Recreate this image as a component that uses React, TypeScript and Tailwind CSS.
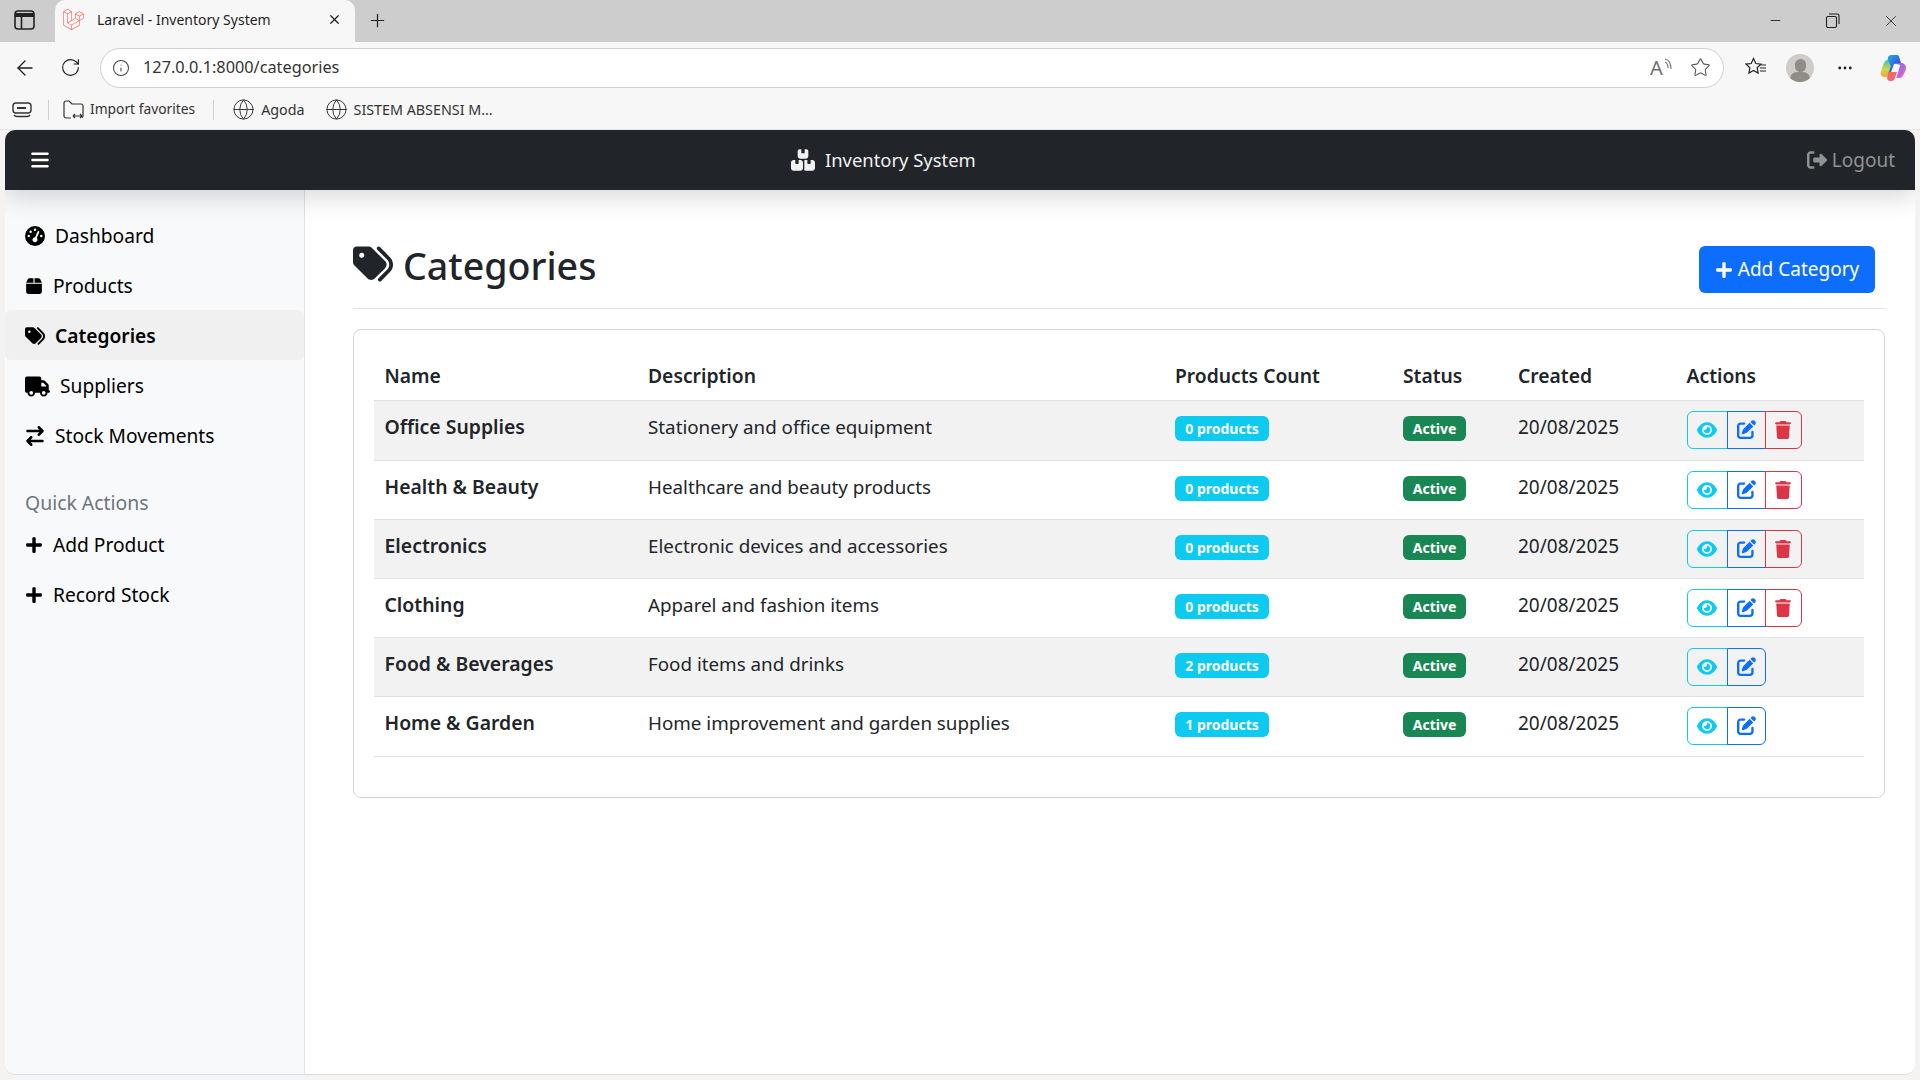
import {
  ArrowLeft,
  Globe,
  Info,
  Minus,
  MoreHorizontal,
  Plus,
  RotateCw,
  Star,
  X,
} from "lucide-react";
import { FaLaravel, FaPlus } from "react-icons/fa";
import {
  FaArrowRightArrowLeft,
  FaBars,
  FaBox,
  FaBoxesStacked,
  FaEye,
  FaGaugeHigh,
  FaPenToSquare,
  FaRightFromBracket,
  FaTags,
  FaTrash,
  FaTruck,
} from "react-icons/fa6";

const font = "font-['Noto_Sans',sans-serif]";

const categories = [
  { name: "Office Supplies", description: "Stationery and office equipment", count: 0, canDelete: true, height: "h-[60px] bg-[#f2f2f2]" },
  { name: "Health & Beauty", description: "Healthcare and beauty products", count: 0, canDelete: true, height: "h-[59px]" },
  { name: "Electronics", description: "Electronic devices and accessories", count: 0, canDelete: true, height: "h-[59px] bg-[#f2f2f2]" },
  { name: "Clothing", description: "Apparel and fashion items", count: 0, canDelete: true, height: "h-[59px]" },
  { name: "Food & Beverages", description: "Food items and drinks", count: 2, canDelete: false, height: "h-[59px] bg-[#f2f2f2]" },
  { name: "Home & Garden", description: "Home improvement and garden supplies", count: 1, canDelete: false, height: "h-[60px]" },
];

function CopilotLogo() {
  return (
    <svg width="28" height="28" viewBox="0 0 28 28" className="ml-[25px]">
      <defs>
        <linearGradient id="copilotA" x1="0" y1="0" x2="1" y2="1">
          <stop offset="0" stopColor="#19c3e8" />
          <stop offset="0.5" stopColor="#2f6fe0" />
          <stop offset="1" stopColor="#1b3fb5" />
        </linearGradient>
        <linearGradient id="copilotB" x1="0" y1="0" x2="0" y2="1">
          <stop offset="0" stopColor="#3fc4a5" />
          <stop offset="0.55" stopColor="#c8d84a" />
          <stop offset="1" stopColor="#f6a53c" />
        </linearGradient>
        <linearGradient id="copilotC" x1="0" y1="0" x2="1" y2="1">
          <stop offset="0" stopColor="#7a63e6" />
          <stop offset="1" stopColor="#e86ad0" />
        </linearGradient>
        <linearGradient id="copilotD" x1="0" y1="0" x2="1" y2="1">
          <stop offset="0" stopColor="#f9703e" />
          <stop offset="1" stopColor="#ee5f9e" />
        </linearGradient>
      </defs>
      <path d="M9 3c1-1.500 2-2 4-2h5c1 0 1.800.6 2 1.500L22 9l-7 1-3 8H7z" fill="url(#copilotA)" />
      <path d="M9 6c-2 0-3 1-4 3l-3 8c-1 3 .5 6 3.500 6H8l4-11z" fill="url(#copilotB)" />
      <path d="M15 9h7c3 0 5 2 5 5 0 1-.3 2-.7 3l-2 4c-1 2-2 3-4 3h-3l4-13z" fill="url(#copilotC)" />
      <path d="M9 18h9l-2 6c-.6 2-1.500 3-3.500 3h-1.500c-1.500 0-2.500-1-3-2.500z" fill="url(#copilotD)" />
    </svg>
  );
}

function BrowserChrome() {
  return (
    <div className="font-['Noto_Sans',sans-serif] text-[#1f1f1f]">
      {/* Tab strip */}
      <div className="h-[42px] bg-[#cdcdcd] flex items-end">
        <svg width="21" height="20" viewBox="0 0 21 20" className="ml-[14px] mb-[12px] text-[#222]" fill="none" stroke="currentColor" strokeWidth="1.6">
          <rect x="1" y="1" width="19" height="18" rx="3" />
          <path d="M1 5h19" strokeWidth="4" />
          <path d="M7.500 6v13" />
        </svg>
        <div className="ml-[20px] w-[300px] h-[42px] pb-[4px] bg-[#f7f7f7] rounded-t-[10px] flex items-center">
          <FaLaravel className="ml-[8px] text-[#f4715f]" size={21} />
          <span className="ml-[13px] text-[14px] whitespace-nowrap">Laravel - Inventory System</span>
          <X className="ml-auto mr-[13px] shrink-0" size={15} strokeWidth={2} />
        </div>
        <Plus className="ml-[12px] mb-[11px]" size={21} strokeWidth={1.4} />
        <Minus className="ml-auto mb-[14px]" size={15} strokeWidth={1.4} />
        <svg width="15" height="15" viewBox="0 0 15 15" className="ml-[42px] mb-[14px]" fill="none" stroke="#222" strokeWidth="1.1">
          <rect x="1.500" y="3.500" width="10" height="11" rx="1.500" />
          <path d="M4 1h8.500a1.500 1.500 0 0 1 1.500 1.500V11" />
        </svg>
        <X className="ml-[42px] mr-[20px] mb-[12px]" size={18} strokeWidth={1.1} />
      </div>

      {/* Address row */}
      <div className="h-[51px] bg-[#f7f7f7] flex items-center">
        <ArrowLeft className="ml-[13px]" size={24} strokeWidth={1.3} />
        <RotateCw className="ml-[23px]" size={21} strokeWidth={1.3} />
        <div className="ml-[19px] w-[1624px] h-[40px] bg-white rounded-full border border-[#cfcfcf] flex items-center">
          <Info className="ml-[11px] text-[#444]" size={18} strokeWidth={1.4} />
          <span className="ml-[13px] text-[16.3px] text-[#333]">127.0.0.1:8000/categories</span>
          <span className="ml-auto relative w-[20px] h-[20px] text-[#707070]">
            <span className="absolute left-0 -top-[3px] text-[20px] leading-[26px]">A</span>
            <svg width="9" height="12" viewBox="0 0 9 12" className="absolute right-[-3px] top-0" fill="none" stroke="currentColor" strokeWidth="1.1">
              <path d="M1 1c4 1 6 5 6 10M1 4c2 1 3 3 3 6" />
            </svg>
          </span>
          <Star className="ml-[20px] mr-[12px] text-[#555]" size={21} strokeWidth={1.2} />
        </div>
        <span className="ml-[21px] relative w-[21px] h-[21px]">
          <svg width="22" height="21" viewBox="0 0 22 21" fill="none" stroke="#222" strokeWidth="1.2">
            <path d="M8.500 1.500l2.300 5 5.200.6-3.900 3.600 1 5.300-4.600-2.600-4.600 2.600 1-5.300L1 7.100l5.200-.6z" />
            <path d="M15 11h6M15 14h6M16 8h5" strokeWidth="1.2" />
          </svg>
        </span>
        <span className="ml-[20px] w-[28px] h-[28px] rounded-full bg-[#cfccc8] overflow-hidden relative">
          <span className="absolute left-[9px] top-[5px] w-[11px] h-[13px] rounded-full bg-[#8f8b87]" />
          <span className="absolute left-[4px] top-[18px] w-[20px] h-[14px] rounded-full bg-[#8f8b87]" />
        </span>
        <MoreHorizontal className="ml-[22px] text-[#222]" size={18} strokeWidth={1.8} />
        <CopilotLogo />
      </div>

      {/* Bookmarks row */}
      <div className="h-[37px] pb-[3px] bg-[#f7f7f7] border-b border-[#e6e6e6] flex items-center text-[14.3px] text-[#333]">
        <svg width="20" height="16" viewBox="0 0 20 16" className="ml-[12px]" fill="none" stroke="#333" strokeWidth="1.4">
          <rect x="1" y="1" width="18" height="10" rx="3" />
          <path d="M5 6h9" strokeWidth="2" />
          <path d="M2 13c1 1.500 2 1.500 3 1.500h10c1 0 2 0 3-1.500" />
        </svg>
        <span className="ml-[16px] w-px h-[20px] bg-[#cfcfcf]" />
        <svg width="21" height="20" viewBox="0 0 21 20" className="ml-[14px]" fill="none" stroke="#333" strokeWidth="1.2">
          <path d="M8 18H3a2 2 0 0 1-2-2V3a2 2 0 0 1 2-2h3l3 3h9a2 2 0 0 1 2 2v10a2 2 0 0 1-1 1.700" />
          <path d="M10 16h9M10 16l2-2M10 16l2 2M19 16l-2-2M19 16l-2 2" />
        </svg>
        <span className="ml-[6px] text-[13.8px] whitespace-nowrap">Import favorites</span>
        <span className="ml-[18px] w-px h-[20px] bg-[#cfcfcf]" />
        <Globe className="ml-[18px] text-[#333]" size={23} strokeWidth={1} />
        <span className="ml-[6px]">Agoda</span>
        <Globe className="ml-[20px] text-[#333]" size={23} strokeWidth={1} />
        <span className="ml-[6px] whitespace-nowrap">SISTEM ABSENSI M...</span>
      </div>
    </div>
  );
}

function NavLink({
  icon,
  label,
  active,
}: {
  icon: React.ReactNode;
  label: string;
  active?: boolean;
}) {
  return (
    <div
      className={`h-[50px] px-5 pt-[2px] flex items-center gap-[10px] text-[19.2px] text-black rounded-[6px] ${
        active ? "bg-[#f0f0f0] font-semibold" : ""
      }`}
    >
      {icon}
      <span className="whitespace-nowrap">{label}</span>
    </div>
  );
}

function Sidebar() {
  return (
    <aside className="w-[300px] shrink-0 bg-[#f8f9fa] border-r border-[#dee2e6] pt-5 rounded-bl-[10px]">
      <NavLink icon={<FaGaugeHigh size={20} />} label="Dashboard" />
      <NavLink icon={<FaBox size={18} />} label="Products" />
      <NavLink icon={<FaTags size={20} />} label="Categories" active />
      <NavLink icon={<FaTruck size={25} />} label="Suppliers" />
      <NavLink icon={<FaArrowRightArrowLeft size={20} />} label="Stock Movements" />
      <div className="h-[59px] pt-[28px] px-5 text-[19.4px] leading-[30px] text-[#6c757d]">
        Quick Actions
      </div>
      <NavLink icon={<FaPlus size={18} />} label="Add Product" />
      <NavLink icon={<FaPlus size={18} />} label="Record Stock" />
    </aside>
  );
}

function ActionButtons({ canDelete }: { canDelete: boolean }) {
  return (
    <div className="flex h-[38px] w-fit">
      <span className="w-[41px] border border-[#0dcaf0] rounded-l-[6px] flex items-center justify-center text-[#0dcaf0]">
        <FaEye size={20} />
      </span>
      <span
        className={`w-[39px] -ml-px border border-[#0d6efd] flex items-center justify-center text-[#0d6efd] ${
          canDelete ? "" : "rounded-r-[6px]"
        }`}
      >
        <FaPenToSquare size={19} />
      </span>
      {canDelete && (
        <span className="w-[37px] -ml-px border border-[#dc3545] rounded-r-[6px] flex items-center justify-center text-[#dc3545]">
          <FaTrash size={18} />
        </span>
      )}
    </div>
  );
}

function CategoriesTable() {
  return (
    <table className="w-[1490px] table-fixed border-collapse text-[19px] text-[#212529]">
      <colgroup>
        <col className="w-[264px]" />
        <col className="w-[527px]" />
        <col className="w-[228px]" />
        <col className="w-[115px]" />
        <col className="w-[168px]" />
        <col className="w-[188px]" />
      </colgroup>
      <thead>
        <tr className="h-[50px] border-b border-[#dee2e6] text-left text-[19.3px]">
          <th className="pl-[10.5px] pt-[4px] font-semibold">Name</th>
          <th className="px-[10px] pt-[4px] font-semibold">Description</th>
          <th className="px-[10px] pt-[4px] font-semibold">Products Count</th>
          <th className="px-[10px] pt-[4px] font-semibold">Status</th>
          <th className="px-[10px] pt-[4px] font-semibold">Created</th>
          <th className="pl-[10.5px] pt-[4px] font-semibold">Actions</th>
        </tr>
      </thead>
      <tbody>
        {categories.map((category) => (
          <tr key={category.name} className={`border-b border-[#dee2e6] ${category.height}`}>
            <td className="pl-[10.5px] pt-[11px] align-top text-[19.4px] font-semibold leading-[30px] whitespace-nowrap">
              {category.name}
            </td>
            <td className="px-[10px] pt-[11px] align-top text-[18.8px] leading-[30px] whitespace-nowrap">
              {category.description}
            </td>
            <td className="px-[10px] pt-[15px] align-top">
              <span className="flex h-[25px] w-[94px] items-center justify-center rounded-[6px] bg-[#0dcaf0] text-white text-[14px] font-bold">
                {category.count} products
              </span>
            </td>
            <td className="px-[10px] pt-[15px] align-top">
              <span className="flex h-[25px] w-[63px] items-center justify-center rounded-[6px] bg-[#198754] text-white text-[14px] font-bold">
                Active
              </span>
            </td>
            <td className="px-[10px] pt-[11px] align-top leading-[30px]">20/08/2025</td>
            <td className="pl-[10.5px] pt-[10px] align-top">
              <ActionButtons canDelete={category.canDelete} />
            </td>
          </tr>
        ))}
      </tbody>
    </table>
  );
}

export default function App() {
  return (
    <div className={`h-screen w-[1920px] flex flex-col overflow-hidden bg-[#f5f3f1] ${font}`}>
      <BrowserChrome />
      <div className="ml-[5px] mr-[5px] mb-[5px] flex-1 min-h-0 bg-white rounded-t-[10px] rounded-b-[10px] flex flex-col relative overflow-hidden border-b border-[#dcdcdc]">
        {/* Top navbar */}
        <nav className="h-[60px] shrink-0 bg-[#212529] text-white flex items-center relative z-10 shadow-[0_8px_24px_rgba(0,0,0,0.15)]">
          <FaBars className="ml-[25px]" size={20} />
          <div className="ml-[741px] flex items-center gap-[10px] text-[18.4px] text-[#f1f1f1]">
            <FaBoxesStacked size={24} />
            <span className="whitespace-nowrap">Inventory System</span>
          </div>
          <div className="ml-auto mr-5 flex items-center gap-[5px] text-[19px] text-[#909294]">
            <FaRightFromBracket size={20} />
            <span>Logout</span>
          </div>
        </nav>

        <div className="flex-1 min-h-0 flex">
          <Sidebar />
          <main className="flex-1 min-w-0 pl-[48px] pr-[30px] pt-[56px]">
            <div className="h-[63px] border-b border-[#dee2e6] flex items-start">
              <FaTags className="text-[#212529] -mt-[2px]" size={40} />
              <h1 className="ml-[10px] -mt-[4px] text-[37.6px] leading-[48px] text-[#212529] font-medium">
                Categories
              </h1>
              <button className="ml-auto mr-[10px] h-[47px] w-[176px] rounded-[6px] bg-[#0d6efd] text-white text-[19px] flex items-center justify-center gap-[5px]">
                <FaPlus size={18} />
                Add Category
              </button>
            </div>
            <div className="mt-[20px] h-[469px] rounded-[8px] border border-[#d5d5d5] pt-[20px] pl-[20px]">
              <CategoriesTable />
            </div>
          </main>
        </div>
      </div>
    </div>
  );
}
